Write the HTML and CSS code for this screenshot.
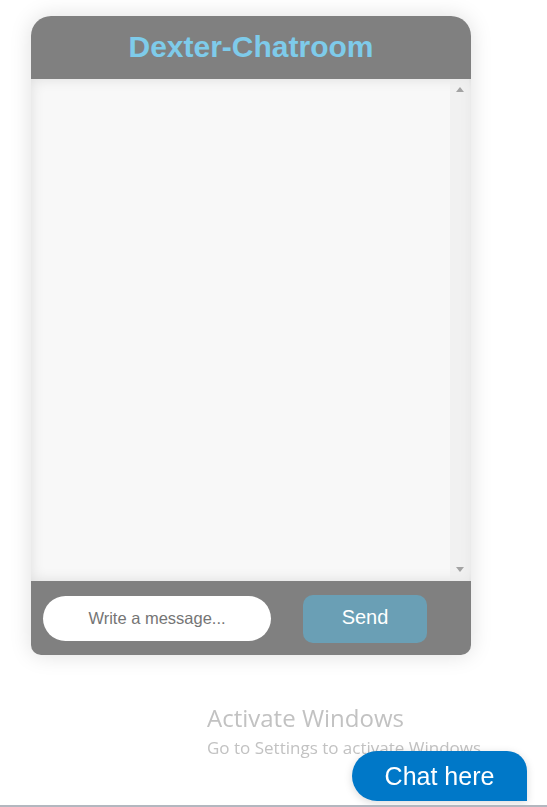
FILE: index.html
```html
<!DOCTYPE html>
<html lang="en">
<head>
<meta charset="utf-8">
<title>Dexter-Chatroom</title>
<link rel="stylesheet" href="styles.css">
</head>
<body>
<div class="page">
  <div class="chat-card">
    <header class="chat-header">
      <h1 class="chat-title">Dexter-Chatroom</h1>
    </header>
    <div class="chat-body">
      <div class="messages"></div>
      <div class="scrollbar">
        <span class="arrow arrow-up"></span>
        <span class="arrow arrow-down"></span>
      </div>
    </div>
    <footer class="chat-footer">
      <input class="msg-input" type="text" placeholder="Write a message...">
      <button class="send-btn" type="button">Send</button>
    </footer>
  </div>
</div>
<div class="watermark">
  <div class="wm-title">Activate Windows</div>
  <div class="wm-sub">Go to Settings to activate Windows.</div>
</div>
<button class="chat-here" type="button">Chat here</button>
<div class="taskbar-line"></div>
</body>
</html>
```

FILE: styles.css
```css
html, body {
  margin: 0;
  padding: 0;
  background: #ffffff;
  height: 100%;
  overflow: hidden;
}
body {
  font-family: "Liberation Sans", Arial, sans-serif;
}
.page {
  padding: 16px 0 0 31px;
}
.chat-card {
  width: 440px;
  display: flex;
  flex-direction: column;
  border-radius: 20px 20px 10px 10px;
  box-shadow: 0 0 22px rgba(0, 0, 0, 0.13);
}
.chat-header {
  height: 63px;
  background: #808080;
  border-radius: 20px 20px 0 0;
  display: flex;
  align-items: center;
  justify-content: center;
}
.chat-title {
  margin: 0;
  font-size: 30px;
  font-weight: bold;
  color: #7ecbea;
  padding-bottom: 2px;
}
.chat-body {
  height: 502px;
  background: #f8f8f8;
  display: flex;
  box-shadow: inset 0 0 14px rgba(0, 0, 0, 0.11);
}
.messages {
  flex: 1;
}
.scrollbar {
  width: 19px;
  margin-right: 2px;
  background: rgba(236, 236, 236, 0.6);
  display: flex;
  flex-direction: column;
  justify-content: space-between;
  align-items: center;
  padding: 8px 0 9px;
}
.arrow {
  width: 0;
  height: 0;
  border-left: 4.5px solid transparent;
  border-right: 4.5px solid transparent;
}
.arrow-up {
  border-bottom: 5px solid #a3a3a3;
}
.arrow-down {
  border-top: 5px solid #a3a3a3;
}
.chat-footer {
  height: 74px;
  background: #808080;
  border-radius: 0 0 10px 10px;
  display: flex;
  align-items: center;
  padding: 0 44px 0 12px;
  gap: 32px;
}
.msg-input {
  width: 228px;
  height: 45px;
  box-sizing: border-box;
  border: none;
  border-radius: 23px;
  background: #ffffff;
  font-family: "Liberation Sans", Arial, sans-serif;
  font-size: 16.5px;
  text-align: center;
  outline: none;
  margin-top: 1px;
}
.msg-input::placeholder {
  color: #757575;
}
.send-btn {
  width: 124px;
  height: 48px;
  border: none;
  border-radius: 10px;
  background: #6a9fb5;
  color: #ffffff;
  font-family: "Liberation Sans", Arial, sans-serif;
  font-size: 20px;
  margin-top: 2px;
  padding: 0 0 3px;
}
.watermark {
  position: fixed;
  left: 207px;
  top: 703px;
  color: #c2c2c2;
  font-family: "Open Sans", "Noto Sans", sans-serif;
}
.wm-title {
  font-size: 24px;
  line-height: 30px;
}
.wm-sub {
  font-size: 17px;
  line-height: 22px;
  margin-top: 4px;
}
.chat-here {
  position: fixed;
  left: 352px;
  top: 751px;
  width: 175px;
  height: 50px;
  border: none;
  border-radius: 25px 20px 0 25px;
  background: #0078c8;
  color: #ffffff;
  font-family: "Liberation Sans", Arial, sans-serif;
  font-size: 25px;
  box-shadow: 0 2px 8px rgba(0, 0, 0, 0.15);
  padding: 0;
}
.taskbar-line {
  position: fixed;
  left: 0;
  right: 0;
  bottom: 0;
  height: 2px;
  background: #b3b7bf;
}
```
